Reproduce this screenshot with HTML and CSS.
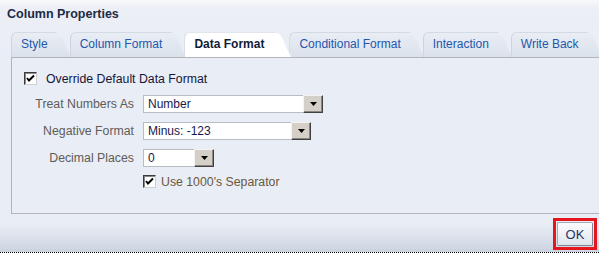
FILE: index.html
```html
<!DOCTYPE html>
<html>
<head>
<meta charset="utf-8">
<link rel="stylesheet" href="styles.css">
</head>
<body>
<div class="dialog">
  <div class="title">Column Properties</div>
  <div class="tabs">
    <div class="tab">Style</div>
    <div class="tab">Column Format</div>
    <div class="tab active">Data Format</div>
    <div class="tab">Conditional Format</div>
    <div class="tab">Interaction</div>
    <div class="tab">Write Back</div>
  </div>
  <div class="panel">
    <div class="check-row">
      <span class="checkbox"><svg width="9" height="9" viewBox="0 0 9 9"><path d="M1 4 L3 6.5 L8 1.5" fill="none" stroke="#000" stroke-width="2"/></svg></span>
      <span class="override">Override Default Data Format</span>
    </div>
    <div class="form">
      <div class="label">Treat Numbers As</div>
      <div class="select w1"><span class="val">Number</span><span class="btn"><svg width="7" height="4" viewBox="0 0 7 4"><path d="M0 0H7L3.5 4Z" fill="#000"/></svg></span></div>
      <div class="label">Negative Format</div>
      <div class="select w2"><span class="val">Minus: -123</span><span class="btn"><svg width="7" height="4" viewBox="0 0 7 4"><path d="M0 0H7L3.5 4Z" fill="#000"/></svg></span></div>
      <div class="label">Decimal Places</div>
      <div class="select w3"><span class="val">0</span><span class="btn"><svg width="7" height="4" viewBox="0 0 7 4"><path d="M0 0H7L3.5 4Z" fill="#000"/></svg></span></div>
      <div></div>
      <div class="check-row sep">
        <span class="checkbox"><svg width="9" height="9" viewBox="0 0 9 9"><path d="M1 4 L3 6.5 L8 1.5" fill="none" stroke="#000" stroke-width="2"/></svg></span>
        <span class="sep-text">Use 1000's Separator</span>
      </div>
    </div>
  </div>
  <div class="footer">
    <div class="focus"><div class="ok">OK</div></div>
  </div>
</div>
</body>
</html>
```

FILE: styles.css
```css
html, body {
  margin: 0;
  padding: 0;
  background: #ffffff;
  overflow: hidden;
}
body {
  width: 599px;
  height: 255px;
  font-family: "Liberation Sans", Arial, sans-serif;
  font-size: 12px;
}
.dialog {
  height: 252px;
  border-bottom: 1px dotted #000;
  background: linear-gradient(#f8f9fb 0px, #eceff5 8px, #e9edf5 60px, #e9edf5 224px, #cdd4e0 251px);
  display: flex;
  flex-direction: column;
  overflow: hidden;
}
.title {
  padding: 6px 0 0 7px;
  height: 16px;
  line-height: 16px;
  font-weight: bold;
  font-size: 12.5px;
  color: #1c2a46;
  margin-bottom: 10px;
}
.tabs {
  display: flex;
  padding-left: 11px;
  height: 25px;
  white-space: nowrap;
}
.tab {
  flex: none;
  height: 25px;
  box-sizing: border-box;
  padding: 4px 24px 0 9px;
  line-height: 15px;
  color: #2356ad;
  background: linear-gradient(#e9edf4, #dbe2ec);
  border-top: 1px solid #d3dae4;
  border-left: 1px solid #cdd4df;
  border-top-left-radius: 6px;
  margin-right: -2px;
  clip-path: polygon(0 0, calc(100% - 16px) 0, calc(100% - 12px) 2px, calc(100% - 9px) 6px, calc(100% - 4px) 18px, 100% 100%, 0 100%);
}
.tab.active {
  background: #ffffff;
  color: #101c3a;
  font-weight: bold;
  position: relative;
  z-index: 1;
  border-top-color: #e2e6ec;
  padding-right: 27px;
}
.panel {
  margin-left: 11px;
  width: 600px;
  border: 1px solid #b3b5b9;
  padding: 14px 0 0 12px;
  box-sizing: border-box;
  height: 157px;
  flex: none;
}
.check-row {
  display: flex;
  align-items: center;
  height: 13px;
}
.checkbox {
  width: 13px;
  height: 13px;
  box-sizing: border-box;
  background: #fff;
  border: 1px solid;
  border-color: #3c3c3c #d0d0d0 #d0d0d0 #3c3c3c;
  box-shadow: inset 1px 1px 0 #888;
  display: flex;
  align-items: center;
  justify-content: center;
  flex: none;
}
.checkbox svg { display: block; }
.override {
  margin-left: 9px;
  color: #16163a;
  font-size: 12.3px;
}
.form {
  margin-top: 10px;
  display: grid;
  grid-template-columns: 110px auto;
  column-gap: 9px;
  row-gap: 9px;
  align-items: center;
  justify-items: start;
}
.label {
  justify-self: end;
  color: #5f5c58;
  font-size: 12.3px;
}
.select {
  height: 18px;
  box-sizing: border-box;
  background: #fff;
  border: 1px solid #b9bcc2;
  display: flex;
  align-items: center;
}
.w1 { width: 180px; }
.w2 { width: 168px; }
.w3 { width: 71px; }
.val {
  flex: 1;
  padding-left: 4px;
  color: #18184a;
  line-height: 16px;
}
.btn {
  width: 20px;
  height: 18px;
  margin: -1px -1px -1px 0;
  box-sizing: border-box;
  background: #d4d0c8;
  border: 1px solid;
  border-color: #f4f3ef #404040 #404040 #f4f3ef;
  box-shadow: inset -1px -1px 0 #8a877f;
  display: flex;
  align-items: center;
  justify-content: center;
}
.btn svg { display: block; }
.sep {
  margin-top: -1px;
}
.sep-text {
  margin-left: 5px;
  color: #6a5840;
  font-size: 12.3px;
}
.footer {
  display: flex;
  justify-content: flex-end;
  padding: 4px 2px 0 0;
}
.focus {
  border: 3px solid #e6161f;
  padding: 1px;
}
.ok {
  width: 36px;
  height: 24px;
  box-sizing: border-box;
  border: 1px solid;
  border-color: #a3aab6 #7d8594 #7d8594 #a3aab6;
  border-radius: 2px;
  background: linear-gradient(#fbfbfc, #eef1f5 50%, #dfe4ec);
  color: #1e3566;
  display: flex;
  align-items: center;
  justify-content: center;
  font-size: 13px;
}
```
